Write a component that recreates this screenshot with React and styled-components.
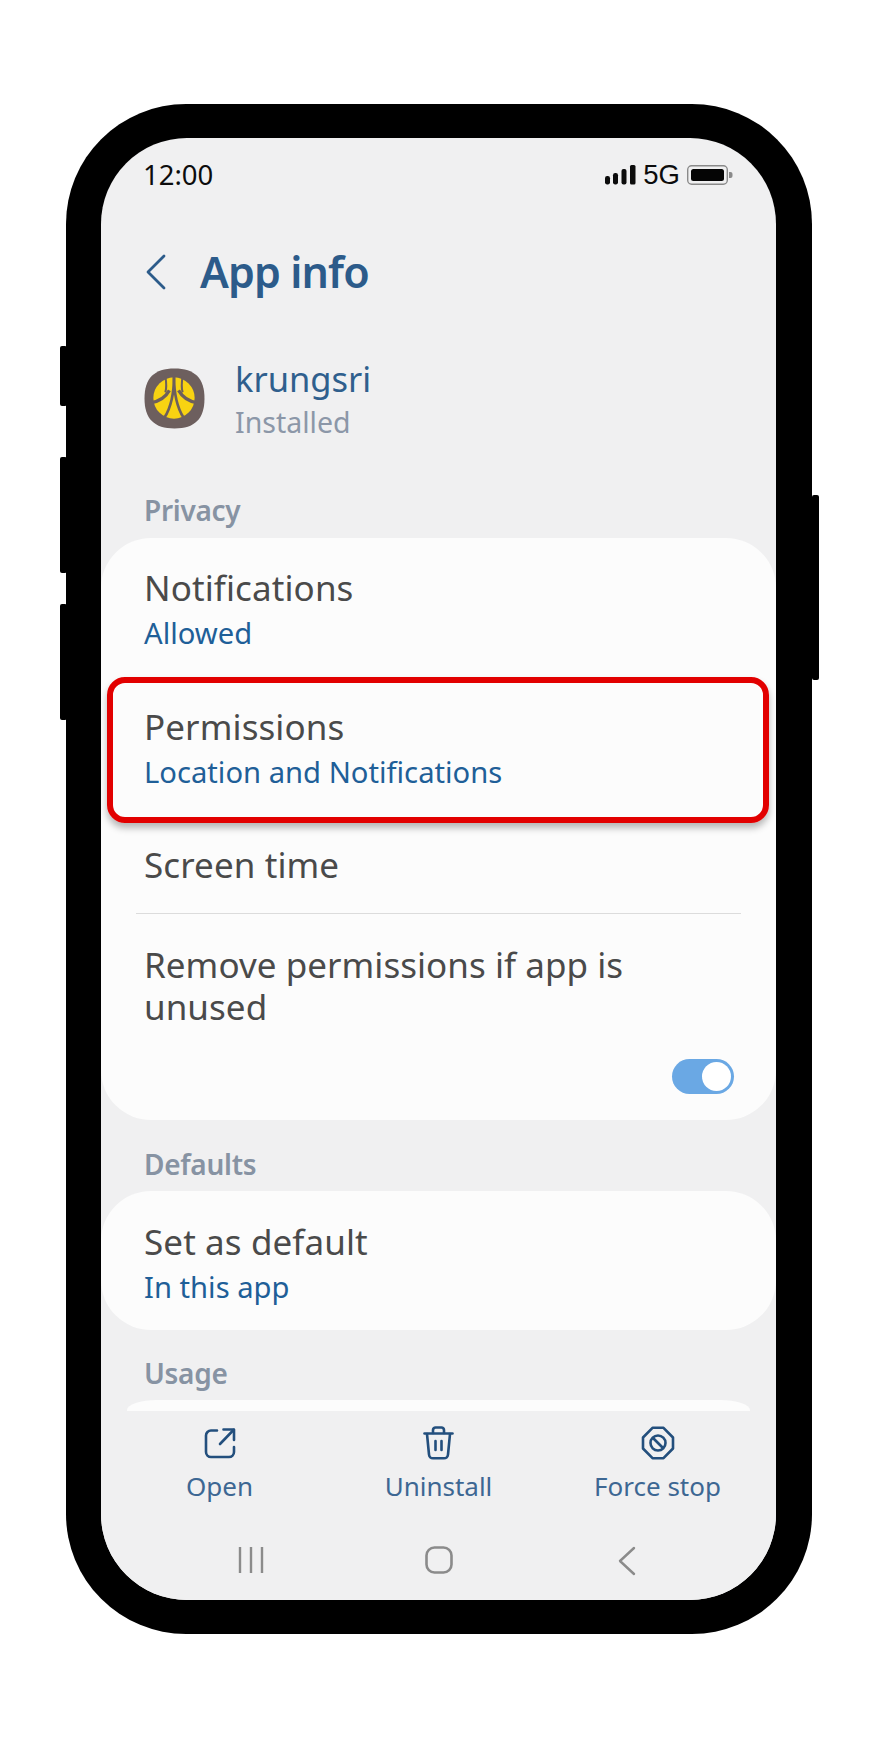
import React from "react";
import styled, { createGlobalStyle } from "styled-components";

const Global = createGlobalStyle`
  html, body { margin: 0; padding: 0; background: #fff; }
  body { font-family: "Noto Sans", "Open Sans", sans-serif; }
  * { box-sizing: border-box; }
`;

const Page = styled.div`
  width: 880px;
  height: 1740px;
  padding: 104px 0 0 66px;
  background: #fff;
`;

const Phone = styled.div`
  position: relative;
  width: 746px;
  height: 1530px;
  padding: 34px 36px 34px 35px;
  background: #000;
  border-radius: 120px;
`;

const SideButton = styled.div`
  position: absolute;
  width: 7px;
  background: #000;
  border-radius: 2px;
  top: ${(p) => p.$top}px;
  height: ${(p) => p.$height}px;
  ${(p) => (p.$right ? "right: -7px;" : "left: -6px;")}
`;

const Screen = styled.div`
  display: flex;
  flex-direction: column;
  height: 100%;
  overflow: hidden;
  background: #f0f0f1;
  border-radius: 86px;
`;

const StatusBar = styled.div`
  flex: none;
  display: flex;
  align-items: center;
  justify-content: space-between;
  height: 74px;
  padding: 0 43px 0 42px;
  color: #0c0c0c;
`;

const Clock = styled.span`
  font-size: 27.5px;
  line-height: 30px;
`;

const StatusIcons = styled.div`
  display: flex;
  align-items: center;
  gap: 7px;
`;

const NetworkLabel = styled.span`
  font-family: "Liberation Sans", sans-serif;
  font-size: 27.5px;
  line-height: 30px;
`;

const Scroll = styled.div`
  flex: 1;
  min-height: 0;
  overflow: hidden;
`;

const Header = styled.div`
  display: flex;
  align-items: center;
  gap: 34px;
  height: 120px;
  padding-left: 45px;
  color: #2c5b8a;
`;

const Title = styled.h1`
  margin: 0;
  font-size: 43px;
  line-height: 56px;
  font-weight: 600;
  letter-spacing: -0.9px;
`;

const AppRow = styled.div`
  display: flex;
  align-items: center;
  gap: 30px;
  height: 132px;
  padding-left: 43px;
`;

const AppText = styled.div`
  padding-top: 4px;
`;

const AppName = styled.div`
  font-size: 34.5px;
  line-height: 43px;
  color: #2f5f8d;
`;

const AppState = styled.div`
  padding-top: 1px;
  font-size: 28.5px;
  line-height: 43px;
  color: #8c97a8;
`;

const SectionLabel = styled.div`
  padding: ${(p) => p.$top}px 0 ${(p) => p.$bottom}px 43px;
  font-size: 28px;
  line-height: 40px;
  font-weight: 600;
  letter-spacing: -0.3px;
  color: #8793a3;
`;

const Card = styled.div`
  background: #fcfcfc;
  border-radius: 50px;
`;

const Row = styled.div`
  position: relative;
  padding: ${(p) => p.$top}px 43px ${(p) => p.$bottom}px;
`;

const Highlight = styled.div`
  position: absolute;
  inset: 0 7px 0 6px;
  border: 6px solid #e20000;
  border-radius: 18px;
  box-shadow: 0 5px 7px rgba(0, 0, 0, 0.28);
`;

const RowTitle = styled.div`
  font-size: 35px;
  line-height: 46px;
  letter-spacing: 0.1px;
  color: #4a4a4a;
`;

const RowValue = styled.div`
  font-size: 29.2px;
  line-height: 44px;
  color: #1f5f98;
`;

const LongTitle = styled.div`
  font-size: 35px;
  line-height: 42px;
  letter-spacing: 0.05px;
  color: #4a4a4a;
`;

const Divider = styled.div`
  height: 1px;
  margin: 0 35px;
  background: #dcdcdc;
`;

const ToggleRow = styled.div`
  display: flex;
  justify-content: flex-end;
  padding: 31px 42px 26px 0;
`;

const Toggle = styled.div`
  display: flex;
  justify-content: flex-end;
  align-items: center;
  width: 62px;
  height: 35px;
  padding: 3px;
  background: #6aa8e4;
  border-radius: 18px;
`;

const Thumb = styled.div`
  width: 29px;
  height: 29px;
  background: #fff;
  border-radius: 50%;
`;

const ClippedCard = styled(Card)`
  height: 30px;
  margin: 0 26px;
  border-radius: 30px 30px 0 0 / 10px 10px 0 0;
`;

const BottomBar = styled.div`
  flex: none;
  height: 189px;
  background: #f0f0f1;
`;

const Actions = styled.div`
  display: grid;
  grid-template-columns: repeat(3, 219px);
  height: 113px;
  padding: 14px 0 0 9px;
`;

const Action = styled.div`
  display: flex;
  flex-direction: column;
  align-items: center;
  color: #234f7d;
`;

const ActionIcon = styled.div`
  display: flex;
  align-items: center;
  justify-content: center;
  height: 36px;
`;

const ActionLabel = styled.div`
  margin-top: 5px;
  font-size: 26px;
  line-height: 40px;
  color: #3d6793;
`;

const NavBar = styled.div`
  display: grid;
  grid-template-columns: repeat(3, 188px);
  padding: 22px 0 0 56px;
  color: #8b8b8b;
`;

const NavItem = styled.div`
  display: flex;
  justify-content: center;
`;

const Signal = () => (
  <svg width="31" height="20" viewBox="0 0 31 20" fill="#0c0c0c">
    <rect x="0" y="11" width="5" height="8.5" rx="2.2" />
    <rect x="8" y="8" width="5" height="11.5" rx="2.2" />
    <rect x="16.5" y="4" width="5" height="15.5" rx="2" />
    <rect x="25" y="0" width="5.5" height="19.5" rx="1.5" />
  </svg>
);

const Battery = () => (
  <svg width="46" height="20" viewBox="0 0 46 20">
    <rect x="0.7" y="0.7" width="39.6" height="18.6" rx="4" fill="none" stroke="#8a8a8a" strokeWidth="1.4" />
    <rect x="4" y="4" width="33" height="12" rx="2.5" fill="#050505" />
    <path d="M42 7 h1.5 a2 2 0 0 1 2 2 v2 a2 2 0 0 1 -2 2 H42 z" fill="#8a8a8a" />
  </svg>
);

const BackChevron = () => (
  <svg width="20" height="36" viewBox="0 0 20 36" fill="none" stroke="currentColor" strokeWidth="2.8" strokeLinecap="round" strokeLinejoin="round">
    <path d="M18 2 L2 18 L18 34" />
  </svg>
);

const KrungsriLogo = () => (
  <svg width="61" height="61" viewBox="0 0 60 60">
    <path d="M30 0.5 C50 0.5 59.5 10 59.5 30 C59.5 50 50 59.5 30 59.5 C10 59.5 0.5 50 0.5 30 C0.5 10 10 0.5 30 0.5 Z" fill="#6d5f5e" />
    <circle cx="29.5" cy="29.5" r="20.3" fill="#f8d312" />
    <g fill="none" stroke="#6d5f5e" strokeWidth="2.6">
      <path d="M29.5 8 C29.5 24 27 38 20 49" />
      <path d="M29.5 8 C29.5 24 32 38 39 49" />
      <path d="M21 8 C22 14 22.5 19 21 24" strokeWidth="2" />
      <path d="M38 8 C37 14 36.5 19 38 24" strokeWidth="2" />
      <path d="M7 34 C14 33 21 29 25 22" strokeWidth="3.2" />
      <path d="M52 34 C45 33 38 29 34 22" strokeWidth="3.2" />
    </g>
  </svg>
);

const OpenIcon = () => (
  <svg width="32" height="32" viewBox="0 0 32 32" fill="none" stroke="currentColor" strokeWidth="2.6" strokeLinecap="round" strokeLinejoin="round">
    <path d="M13 3.5 H7 a5 5 0 0 0 -5 5 V25 a5 5 0 0 0 5 5 H25 a5 5 0 0 0 5 -5 V20" />
    <path d="M16 17 L29.5 3" />
    <path d="M19.5 2.5 H30 V13" />
  </svg>
);

const TrashIcon = () => (
  <svg width="31" height="34" viewBox="0 0 31 34" fill="none" stroke="currentColor" strokeWidth="2.6" strokeLinecap="round" strokeLinejoin="round">
    <path d="M1.5 7.5 H29.5" />
    <path d="M10 7 V4 a2.5 2.5 0 0 1 2.5 -2.5 h6 a2.5 2.5 0 0 1 2.5 2.5 V7" />
    <path d="M4 8 L6 28.5 a4 4 0 0 0 4 3.8 H21 a4 4 0 0 0 4 -3.8 L27 8" />
    <path d="M12.5 15 V24 M18.5 15 V24" />
  </svg>
);

const StopIcon = () => (
  <svg width="34" height="34" viewBox="0 0 34 34" fill="none" stroke="currentColor" strokeWidth="2.6" strokeLinejoin="round">
    <path d="M11.5 1.8 H22.5 L32 11.5 V22.5 L22.5 32.2 H11.5 L2 22.5 V11.5 Z" />
    <circle cx="17" cy="17" r="7.5" />
    <path d="M12 12 L22 22" />
  </svg>
);

const RecentsIcon = () => (
  <svg width="26" height="28" viewBox="0 0 26 28" fill="none" stroke="currentColor" strokeWidth="2.4">
    <path d="M2 1 V27 M13 1 V27 M24 1 V27" />
  </svg>
);

const HomeIcon = () => (
  <svg width="28" height="28" viewBox="0 0 28 28" fill="none" stroke="currentColor" strokeWidth="2.6">
    <rect x="1.5" y="1.5" width="25" height="25" rx="8" />
  </svg>
);

const BackIcon = () => (
  <svg width="18" height="30" viewBox="0 0 18 30" fill="none" stroke="currentColor" strokeWidth="2.4" strokeLinecap="round" strokeLinejoin="round">
    <path d="M16 2 L2 15 L16 28" />
  </svg>
);

export default function App() {
  return (
    <Page>
      <Global />
      <Phone>
        <SideButton $top={242} $height={60} />
        <SideButton $top={353} $height={116} />
        <SideButton $top={500} $height={116} />
        <SideButton $right $top={391} $height={185} />
        <Screen>
          <StatusBar>
            <Clock>12:00</Clock>
            <StatusIcons>
              <Signal />
              <NetworkLabel>5G</NetworkLabel>
              <Battery />
            </StatusIcons>
          </StatusBar>
          <Scroll>
            <Header>
              <BackChevron />
              <Title>App info</Title>
            </Header>
            <AppRow>
              <KrungsriLogo />
              <AppText>
                <AppName>krungsri</AppName>
                <AppState>Installed</AppState>
              </AppText>
            </AppRow>
            <SectionLabel $top={26} $bottom={8}>Privacy</SectionLabel>
            <Card>
              <Row $top={27} $bottom={22}>
                <RowTitle>Notifications</RowTitle>
                <RowValue>Allowed</RowValue>
              </Row>
              <Row $top={27} $bottom={29}>
                <RowTitle>Permissions</RowTitle>
                <RowValue>Location and Notifications</RowValue>
                <Highlight />
              </Row>
              <Row $top={19} $bottom={25}>
                <RowTitle>Screen time</RowTitle>
              </Row>
              <Divider />
              <Row $top={30} $bottom={0}>
                <LongTitle>Remove permissions if app is unused</LongTitle>
              </Row>
              <ToggleRow>
                <Toggle>
                  <Thumb />
                </Toggle>
              </ToggleRow>
            </Card>
            <SectionLabel $top={24} $bottom={7}>Defaults</SectionLabel>
            <Card>
              <Row $top={28} $bottom={21}>
                <RowTitle>Set as default</RowTitle>
                <RowValue>In this app</RowValue>
              </Row>
            </Card>
            <SectionLabel $top={23} $bottom={7}>Usage</SectionLabel>
            <ClippedCard />
          </Scroll>
          <BottomBar>
            <Actions>
              <Action>
                <ActionIcon><OpenIcon /></ActionIcon>
                <ActionLabel>Open</ActionLabel>
              </Action>
              <Action>
                <ActionIcon><TrashIcon /></ActionIcon>
                <ActionLabel>Uninstall</ActionLabel>
              </Action>
              <Action>
                <ActionIcon><StopIcon /></ActionIcon>
                <ActionLabel>Force stop</ActionLabel>
              </Action>
            </Actions>
            <NavBar>
              <NavItem><RecentsIcon /></NavItem>
              <NavItem><HomeIcon /></NavItem>
              <NavItem><BackIcon /></NavItem>
            </NavBar>
          </BottomBar>
        </Screen>
      </Phone>
    </Page>
  );
}
